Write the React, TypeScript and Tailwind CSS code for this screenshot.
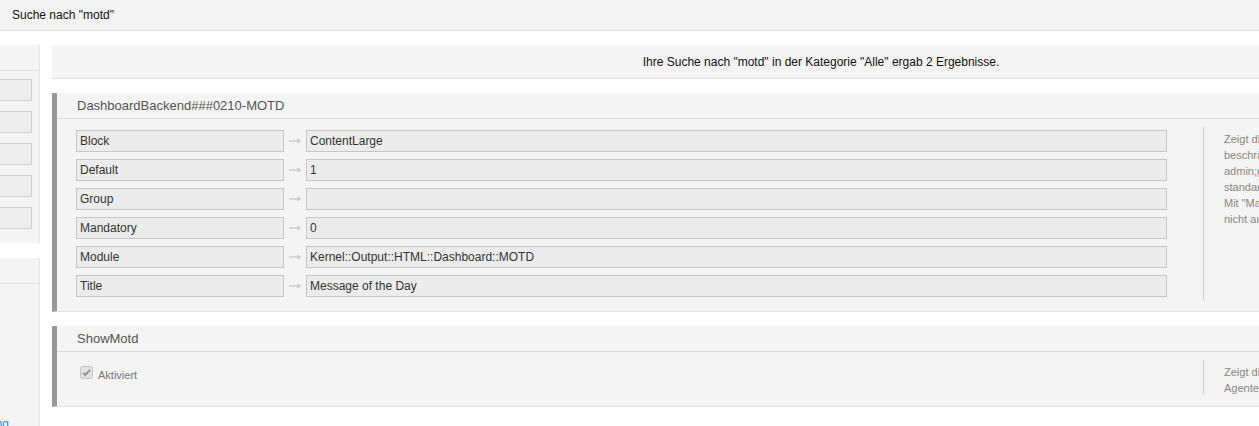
const ROWS = [
  { key: "Block", value: "ContentLarge" },
  { key: "Default", value: "1" },
  { key: "Group", value: "" },
  { key: "Mandatory", value: "0" },
  { key: "Module", value: "Kernel::Output::HTML::Dashboard::MOTD" },
  { key: "Title", value: "Message of the Day" },
];

const DESC_MOTD = [
  "Zeigt die Nachricht des Tages (MOTD) im Agenten-Dashboard an. \"Group\" wird verwendet, um den Zugriff auf das Plugin einzu-",
  "beschränken (z. B. Group: admin;group1;group2;). \"Default\" bestimmt, ob das Plugin",
  "admin;group1;group2;). \"Default\" bestimmt, ob das Plugin",
  "standardmäßig aktiviert ist oder ob der Nutzer es manuell aktivieren muss.",
  "Mit \"Mandatory\" kann festgelegt werden, dass das Plugin",
  "nicht ausgeblendet werden kann.",
];

const DESC_SHOW = [
  "Zeigt die Nachricht des Tages im Dashboard des",
  "Agenten an.",
];

function Arrow() {
  return (
    <svg width="12" height="6" viewBox="0 0 12 6" className="shrink-0">
      <path d="M0 3H10.5" stroke="#c4c4c4" strokeWidth="1.2" />
      <path d="M8.5 1L11 3L8.5 5" fill="none" stroke="#c4c4c4" strokeWidth="1.2" />
    </svg>
  );
}

function Description({ lines }: { lines: string[] }) {
  return (
    <div className="ml-[36px] border-l border-[#cfcfcf] pl-[20px] pt-[4px] w-[350px]">
      {lines.map((l, i) => (
        <div key={i} className="whitespace-nowrap overflow-hidden text-[11px] leading-[16px] text-[#8a8580]">
          {l}
        </div>
      ))}
    </div>
  );
}

function CardHead({ title }: { title: string }) {
  return (
    <div className="h-[26px] border-b border-[#dcdcdc] pl-[20px] flex items-center text-[13px] text-[#555]">
      {title}
    </div>
  );
}

export default function App() {
  return (
    <div
      className="w-[1259px] h-[426px] overflow-hidden bg-white"
      style={{ fontFamily: '"Liberation Sans", Arial, sans-serif' }}
    >
      <div className="h-[31px] bg-[#f3f3f3] border-b border-[#e2e2e2] flex items-center pl-[12px] text-[12px] text-[#111]">
        Suche nach "motd"
      </div>

      <div className="flex mt-[14px]">
        {/* Seitenleiste, links abgeschnitten */}
        <div className="w-[40px] shrink-0 flex flex-col">
          <div className="h-[198px] bg-[#f4f4f4] border-r border-[#e4e4e4]">
            <div className="h-[26px] border-b border-[#e2e2e2]" />
            <div className="flex flex-col gap-[10px] pt-[8px]">
              {[0, 1, 2, 3, 4].map((i) => (
                <div key={i} className="w-[32px] h-[22px] bg-[#ededed] border border-[#cdcdcd] border-l-0" />
              ))}
            </div>
          </div>
          <div className="mt-[15px] h-[168px] bg-[#f4f4f4] border-r border-[#e4e4e4] flex flex-col">
            <div className="h-[26px] border-b border-[#e2e2e2]" />
            <div className="mt-auto -mb-[5px] flex justify-end pr-[30px] overflow-hidden whitespace-nowrap text-[12px] leading-[14px] text-[#3a87c8]">
              Einstellung
            </div>
          </div>
        </div>

        <div className="ml-[12px] w-[1538px] shrink-0">
          <div className="h-[34px] bg-[#f4f4f4] border-b border-[#e2e2e2] flex items-center justify-center text-[12px] text-[#111]">
            Ihre Suche nach "motd" in der Kategorie "Alle" ergab 2 Ergebnisse.
          </div>

          <div className="mt-[14px] bg-[#f4f4f4] border-l-[5px] border-l-[#999] border-b border-b-[#e2e2e2]">
            <CardHead title="DashboardBackend###0210-MOTD" />
            <div className="flex">
              <div className="pl-[19px] pt-[11px] pb-[14px] flex flex-col gap-[7px]">
                {ROWS.map((r) => (
                  <div key={r.key} className="flex items-center">
                    <div className="w-[208px] h-[22px] bg-[#ececec] border border-[#c6c6c6] pl-[3px] flex items-center text-[12px] text-[#333]">
                      {r.key}
                    </div>
                    <div className="w-[22px] flex justify-center">
                      <Arrow />
                    </div>
                    <div className="w-[861px] h-[22px] bg-[#ececec] border border-[#c6c6c6] pl-[3px] flex items-center text-[12px] text-[#333]">
                      {r.value}
                    </div>
                  </div>
                ))}
              </div>
              <div className="mt-[8px] mb-[10px] flex">
                <Description lines={DESC_MOTD} />
              </div>
            </div>
          </div>

          <div className="mt-[14px] bg-[#f4f4f4] border-l-[5px] border-l-[#999] border-b border-b-[#e2e2e2]">
            <CardHead title="ShowMotd" />
            <div className="flex h-[54px]">
              <div className="w-[1110px] pl-[23px] pt-[13px] flex items-start">
                <svg width="13" height="13" viewBox="0 0 13 13" className="mt-[1px] shrink-0">
                  <rect x="0.5" y="0.5" width="12" height="12" rx="2" fill="#e2e2e2" stroke="#c4c4c4" />
                  <path d="M3 6.8L5.3 9L10 3.8" fill="none" stroke="#8c8c8c" strokeWidth="1.8" />
                </svg>
                <span className="ml-[5px] mt-[3px] text-[11px] leading-[14px] text-[#777]">Aktiviert</span>
              </div>
              <div className="mt-[8px] mb-[11px] flex">
                <Description lines={DESC_SHOW} />
              </div>
            </div>
          </div>
        </div>
      </div>
    </div>
  );
}
